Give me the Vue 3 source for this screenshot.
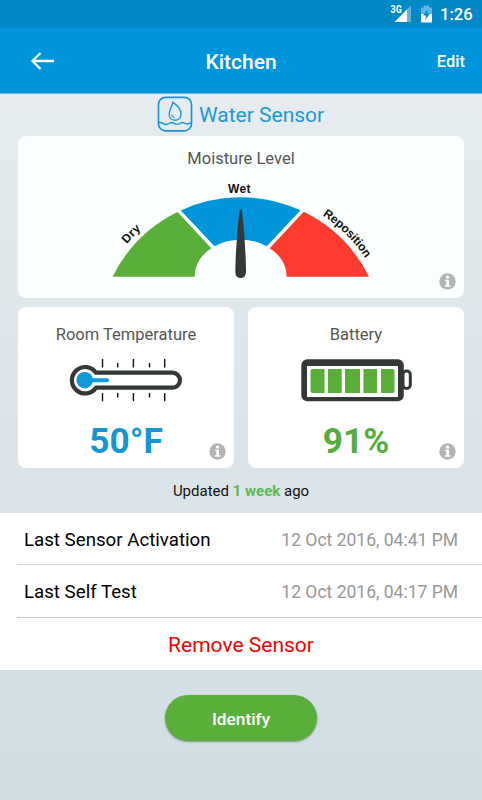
<script setup>
const logs = [
  { label: 'Last Sensor Activation', value: '12 Oct 2016, 04:41 PM' },
  { label: 'Last Self Test', value: '12 Oct 2016, 04:17 PM' },
]
const ticks = [
  { x: 102.5, long: true },
  { x: 117.7, long: false },
  { x: 133.4, long: true },
  { x: 149.5, long: false },
  { x: 164.7, long: true },
]
</script>

<template>
  <main class="screen">
    <div class="status">
      <svg class="signal" viewBox="388 4 26 20">
        <path d="M411 5.5V22H394.500Z" fill="#5db5de" />
        <path d="M407 9.5V22H394.500Z" fill="#fff" />
        <text x="390.6" y="13.300" class="net" textLength="11.200" lengthAdjust="spacingAndGlyphs">3G</text>
      </svg>
      <svg class="power" viewBox="420 4 13 20">
        <path d="M423.5 5.5H429V7.5H431.2Q432 7.5 432 8.3V15H421V8.3Q421 7.5 421.8 7.5H423.5Z" fill="#5db5de" />
        <path d="M421 14H432V21.5Q432 22.5 431 22.5H422Q421 22.5 421 21.5Z" fill="#fff" />
        <path d="M427.6 9.5L423 15.6H426L425.3 20L430 13.6H427Z" fill="#0089c6" />
      </svg>
      <span class="clock">1:26</span>
    </div>

    <header class="bar">
      <svg class="back" viewBox="30 51 25 20">
        <path d="M54 61H32.5M40.5 53L32.5 61L40.5 69" fill="none" stroke="#fff" stroke-width="2.3" />
      </svg>
      <h1>Kitchen</h1>
      <span class="edit">Edit</span>
    </header>

    <div class="sensor">
      <svg class="drop" viewBox="157 96 36 36" fill="none" stroke="#1697d8">
        <rect x="158.5" y="97.4" width="33" height="33.4" rx="7" stroke-width="1.7" />
        <path d="M172.7 102.3C172.7 106 169.2 109.5 169.2 114.2C169.2 118 171.7 120.2 175 120.2C178.5 120.2 181 117.8 181 114C181 109 176.5 104.5 172.7 102.3Z" stroke-width="1.4" />
        <path d="M171.6 114.5Q172 117.2 174.5 117.7" stroke-width="1.1" />
        <path d="M159 122.5Q161.5 122.2 163.5 123.6Q166.500 125.500 169.500 123.300Q171.500 121.700 174.200 123.400Q177.500 125.500 180.500 123.200Q182.500 121.700 185 123.400Q188 125 191 122.500" stroke-width="1.4" />
      </svg>
      <span>Water Sensor</span>
    </div>

    <section class="cards">
      <article class="card wide">
        <h2>Moisture Level</h2>
        <svg class="gauge" viewBox="18 176 446 122">
          <defs>
            <path id="dial" d="M91.3 340.7A149.500 149.500 0 0 1 390.300 340.700" />
          </defs>
          <path d="M112.600 276.700A143.400 143.400 0 0 1 177.500 212L211.300 248.300A46 36.500 0 0 0 194.700 276.700Z" fill="#5aae3a" />
          <path d="M180.800 210.500A143.400 143.400 0 0 1 300.500 210.300L266.800 246.200A46 36.500 0 0 0 214.500 246.200Z" fill="#0095da" />
          <path d="M303.700 211.800A143.400 143.400 0 0 1 369 276.700H286.600A46 36.500 0 0 0 269.700 248.300Z" fill="#ff3b30" />
          <path d="M239.500 210.500Q240.700 208 241.900 210.500Q245.600 240 246 272Q245.500 278 240.700 278Q235.500 278 235.300 272Q235.800 240 239.500 210.500Z" fill="#343838" />
          <text class="mark" x="228" y="192.700">Wet</text>
          <text class="mark"><textPath href="#dial" startOffset="105">Dry</textPath></text>
          <text class="mark tight"><textPath href="#dial" startOffset="321">Reposition</textPath></text>
        </svg>
        <svg class="info" viewBox="0 0 17 17">
          <circle cx="8.500" cy="8.500" r="8.200" fill="#b3b4b5" />
          <circle cx="8.500" cy="4.200" r="1.600" fill="#fff" />
          <path d="M5.800 6.700H10V12.300H11.500V13.700H5.700V12.300H7.200V8H5.800Z" fill="#fff" />
        </svg>
      </article>

      <article class="card">
        <h2>Room Temperature</h2>
        <svg class="art" viewBox="18 354 216 52">
          <path d="M96 372.700H172.500A7.500 7.500 0 0 1 172.500 387.700H96A13.200 13.200 0 1 1 96 372.700Z" fill="#fff" stroke="#343838" stroke-width="4.200" stroke-linejoin="round" />
          <circle cx="84.700" cy="380.200" r="8.300" fill="#0f9adb" />
          <path d="M85 380.200H107" stroke="#0f9adb" stroke-width="4" stroke-linecap="round" />
          <g stroke="#111" stroke-width="1.400">
            <template v-for="t in ticks" :key="t.x">
              <path :d="`M${t.x} ${t.long ? 359 : 363}V367.500`" />
              <path :d="`M${t.x} 393V${t.long ? 401.300 : 397.500}`" />
            </template>
          </g>
        </svg>
        <p class="figure blue">50°F</p>
        <svg class="info" viewBox="0 0 17 17">
          <circle cx="8.500" cy="8.500" r="8.200" fill="#b3b4b5" />
          <circle cx="8.500" cy="4.200" r="1.600" fill="#fff" />
          <path d="M5.800 6.700H10V12.300H11.500V13.700H5.700V12.300H7.200V8H5.800Z" fill="#fff" />
        </svg>
      </article>

      <article class="card">
        <h2>Battery</h2>
        <svg class="art" viewBox="248 354 216 52">
          <rect x="403" y="371" width="7.300" height="17.500" rx="3.500" fill="#fff" stroke="#343838" stroke-width="3" />
          <rect x="301.300" y="359.300" width="102.500" height="42" rx="6" fill="#343838" />
          <rect x="307" y="366" width="91" height="31" fill="#fff" />
          <path d="M312.500 369H324.500V393H312.500Q310.500 393 310.500 391V371Q310.500 369 312.500 369Z" fill="#5aae3a" />
          <path d="M328 369H341.700V393H328ZM345 369H360V393H345ZM363.500 369H377V393H363.500Z" fill="#5aae3a" />
          <path d="M381 369H392.500Q394.500 369 394.500 371V391Q394.500 393 392.500 393H381Z" fill="#5aae3a" />
        </svg>
        <p class="figure green">91%</p>
        <svg class="info" viewBox="0 0 17 17">
          <circle cx="8.500" cy="8.500" r="8.200" fill="#b3b4b5" />
          <circle cx="8.500" cy="4.200" r="1.600" fill="#fff" />
          <path d="M5.800 6.700H10V12.300H11.500V13.700H5.700V12.300H7.200V8H5.800Z" fill="#fff" />
        </svg>
      </article>
    </section>

    <p class="updated">Updated <b>1 week</b> ago</p>

    <section class="list">
      <div v-for="log in logs" :key="log.label" class="row">
        <span>{{ log.label }}</span>
        <time>{{ log.value }}</time>
      </div>
      <div class="remove">Remove Sensor</div>
    </section>

    <button class="identify">Identify</button>
  </main>
</template>

<style>
body {
  margin: 0;
}
</style>

<style scoped>
.screen {
  box-sizing: border-box;
  width: 482px;
  height: 800px;
  overflow: hidden;
  display: flex;
  flex-direction: column;
  background: linear-gradient(#e6ecef 94px, #dae4e9 480px, #d1dde3 800px);
  font-family: Roboto, sans-serif;
}
h1, h2, p {
  margin: 0;
  font-weight: 400;
}
svg {
  display: block;
  flex: none;
}
.status {
  height: 28px;
  flex: none;
  background: #0089c6;
  display: flex;
  align-items: center;
  padding-left: 388px;
  color: #fff;
}
.signal {
  width: 26px;
  height: 20px;
}
.net {
  font: 700 10px Roboto, sans-serif;
  fill: #fff;
}
.power {
  width: 13px;
  height: 20px;
  margin-left: 6px;
}
.clock {
  font-size: 16.600px;
  font-weight: 500;
  line-height: 20px;
  padding: 2px 0 0 7px;
}
.bar {
  height: 65px;
  flex: none;
  box-sizing: content-box;
  border-bottom: 1px solid #6dbfe4;
  background: #0095da;
  color: #fff;
  display: grid;
  grid-template-columns: 1fr auto 1fr;
  align-items: center;
  padding: 0 17px 0 30px;
}
.back {
  width: 25px;
  height: 20px;
}
.bar h1 {
  font-size: 21px;
  font-weight: 500;
  line-height: 24px;
  padding: 3px 13px 0 0;
}
.edit {
  justify-self: end;
  font-size: 16.500px;
  font-weight: 500;
  line-height: 20px;
  padding-top: 3px;
}
.sensor {
  height: 42px;
  flex: none;
  display: flex;
  gap: 6px;
  padding: 2px 0 0 157px;
  box-sizing: border-box;
  color: #1b98d9;
  font-size: 21px;
  line-height: 39px;
}
.drop {
  width: 36px;
  height: 36px;
}
.cards {
  flex: none;
  display: grid;
  grid-template-columns: 216px 216px;
  grid-template-rows: 162px 161.500px;
  gap: 8.500px 14px;
  padding: 0 18px;
}
.card {
  position: relative;
  background: #fff;
  border-radius: 8px;
  text-align: center;
}
.wide {
  grid-column: 1 / 3;
  background: #fbfeff;
}
.card h2 {
  font-size: 16.500px;
  line-height: 20px;
  padding-top: 18.500px;
  color: #555;
}
.wide h2 {
  padding-top: 13px;
}
.gauge {
  width: 446px;
  height: 122px;
  margin-top: 7px;
}
.mark {
  font: 700 12px "Liberation Sans", Arial, sans-serif;
  letter-spacing: 0.400px;
  fill: #111;
}
.mark.tight {
  letter-spacing: -0.100px;
}
.info {
  position: absolute;
  right: 8px;
  bottom: 8.500px;
  width: 17px;
  height: 17px;
}
.art {
  width: 216px;
  height: 52px;
  margin-top: 9px;
}
.figure {
  font-size: 35.200px;
  font-weight: 700;
  line-height: 42px;
  margin-top: 14px;
}
.blue {
  color: #1595d8;
}
.green {
  color: #55ad3e;
}
.updated {
  height: 45px;
  flex: none;
  text-align: center;
  font-size: 15px;
  line-height: 46px;
  color: #111;
}
.updated b {
  color: #5cb950;
}
.list {
  height: 157px;
  flex: none;
  background: #fff;
}
.row {
  box-sizing: border-box;
  height: 52px;
  margin-left: 17px;
  padding: 2px 24px 0 7px;
  border-bottom: 1px solid #d8d8d8;
  display: flex;
  justify-content: space-between;
  align-items: center;
  font-size: 18.700px;
  color: #000;
}
.row + .row {
  height: 53px;
  border-color: #c8c8c8;
}
.row time {
  font-size: 17.500px;
  color: #979797;
}
.remove {
  height: 52px;
  line-height: 55px;
  text-align: center;
  font-size: 21px;
  color: #f20000;
}
.identify {
  width: 152px;
  height: 46px;
  flex: none;
  margin: 25px 0 0 165px;
  border: 0;
  border-radius: 23px;
  background: #5aae3a;
  color: #fff;
  font: 500 17.300px/46px Roboto, sans-serif;
  padding: 1px 0;
  box-shadow: 0 1px 2px #7f918a;
}
</style>
